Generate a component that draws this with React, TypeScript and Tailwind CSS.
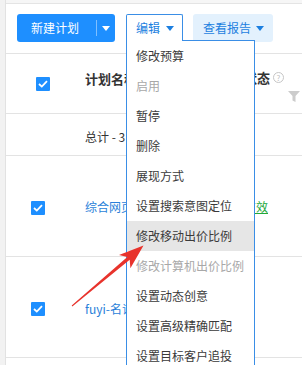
import React from "react";

const font = { fontFamily: '"Noto Sans CJK SC", "Microsoft YaHei", sans-serif' };

function Caret({ color }: { color: string }) {
  return (
    <svg width="8" height="5" viewBox="0 0 8 5" className="block">
      <path d="M0 0 L8 0 L4 5 Z" fill={color} />
    </svg>
  );
}

function Check() {
  return (
    <div className="w-[14px] h-[14px] rounded-[1px] bg-[#1e8fff] flex items-center justify-center">
      <svg width="10" height="8" viewBox="0 0 10 8">
        <path d="M1 4 L3.8 6.6 L9 1.2" stroke="#fff" strokeWidth="1.8" fill="none" />
      </svg>
    </div>
  );
}

const items: { t: string; dis?: boolean; hl?: boolean }[] = [
  { t: "修改预算" },
  { t: "启用", dis: true },
  { t: "暂停" },
  { t: "删除" },
  { t: "展现方式" },
  { t: "设置搜索意图定位" },
  { t: "修改移动出价比例", hl: true },
  { t: "修改计算机出价比例", dis: true },
  { t: "设置动态创意" },
  { t: "设置高级精确匹配" },
  { t: "设置目标客户追投" },
];

export default function App() {
  return (
    <div className="relative w-[302px] h-[365px] overflow-hidden bg-white flex" style={font}>
      <div className="w-[6px] shrink-0 bg-[#f2f2f2] border-r border-[#e2e2e2]" />
      <div className="flex-1 flex flex-col">
        <div className="h-[4px] bg-[#f6f6f6] border-b border-[#e4e4e4]" />
        {/* toolbar */}
        <div className="relative z-10 h-[50px] border-b border-[#e3e3e3] pl-[11px] pt-[10px] flex items-start">
          <div className="flex h-[28px] w-[98px] rounded-[3px] bg-[#1e8fff] text-white text-[12px]">
            <div className="w-[79px] flex items-center pl-[14px]">新建计划</div>
            <div className="w-px my-[6px] bg-[#7fbfff]" />
            <div className="flex-1 flex items-center justify-center pr-[1px]">
              <Caret color="#ffffff" />
            </div>
          </div>
          <div className="relative ml-[11px]">
            <div className="relative z-20 w-[57px] h-[27px] border border-b-0 border-[#3a8ee6] bg-white flex items-center pl-[9px] text-[12px] text-[#1c7fe0] rounded-t-[2px]">
              <span>编辑</span>
              <span className="ml-[6px]">
                <Caret color="#1c7fe0" />
              </span>
            </div>
            <div className="absolute left-0 top-[26px] w-[129px] border border-[#3a8ee6] bg-white">
              {items.map((it) => (
                <div
                  key={it.t}
                  className={
                    "h-[30px] flex items-center pl-[9px] text-[12px] whitespace-nowrap " +
                    (it.dis ? "text-[#a8a8a8] " : "text-[#3a3a3a] ") +
                    (it.hl ? "bg-[#e6e6e6]" : "")
                  }
                >
                  {it.t}
                </div>
              ))}
            </div>
          </div>
          <div className="ml-[10px] h-[28px] w-[80px] rounded-[3px] bg-[#e3f1fd] text-[#1c7fe0] text-[12px] flex items-center pl-[10px]">
            <span>查看报告</span>
            <span className="ml-[5px]">
              <Caret color="#1c7fe0" />
            </span>
          </div>
        </div>
        {/* header row */}
        <div className="h-[60px] border-b border-[#e3e3e3] flex">
          <div className="w-[79px] pl-[30px] pt-[23px]">
            <Check />
          </div>
          <div className="w-[41px] overflow-hidden whitespace-nowrap pt-[15px] text-[13px] font-bold text-[#333]">计划名称</div>
          <div className="flex-1" />
          <div className="w-[58px] flex flex-col pt-[14px]">
            <div className="flex items-center">
              <span className="text-[13px] font-bold text-[#333]">状态</span>
              <span className="ml-[3px] w-[11px] h-[11px] rounded-full border border-[#c6c6c6] text-[#c0c0c0] text-[8px] leading-none flex items-center justify-center">?</span>
            </div>
            <div className="pl-[44px] pt-[3px]">
              <svg width="12" height="11" viewBox="0 0 12 11">
                <path d="M0 0 H12 L7.5 5 V11 L4.5 9.5 V5 Z" fill="#cccccc" />
              </svg>
            </div>
          </div>
        </div>
        {/* total row */}
        <div className="h-[42px] border-b border-[#e3e3e3] flex">
          <div className="w-[79px]" />
          <div className="flex-1 pt-[14px] text-[12px] text-[#333]">总计 - 3</div>
        </div>
        {/* row 1 */}
        <div className="h-[101px] border-b border-[#e3e3e3] flex items-center">
          <div className="w-[79px] pl-[25px] pt-[3px]">
            <Check />
          </div>
          <div className="w-[41px] overflow-hidden text-[12px] text-[#2a7fd9] whitespace-nowrap pt-[2px]">综合网页推广计划</div>
          <div className="flex-1" />
          <div className="w-[58px] text-[12px] text-[#22a83a] underline pt-[2px]">有效</div>
        </div>
        {/* row 2 */}
        <div className="h-[101px] border-b border-[#e3e3e3] flex items-center">
          <div className="w-[79px] pl-[25px] pt-[4px]">
            <Check />
          </div>
          <div className="w-[41px] overflow-hidden text-[12px] text-[#2a7fd9] whitespace-nowrap pt-[4px]">fuyi-名词计划</div>
          <div className="flex-1" />
          <div className="w-[58px]" />
        </div>
      </div>
      {/* red arrow annotation */}
      <svg className="absolute left-0 top-0 pointer-events-none z-30" width="302" height="365" viewBox="0 0 302 365">
        <polygon
          points="72.3,306.4 129.7,259.7 130.4,268.2 143.5,245.5 119,254.9 127.3,256.9 71.7,305.6"
          fill="#e8332c"
        />
      </svg>
    </div>
  );
}
